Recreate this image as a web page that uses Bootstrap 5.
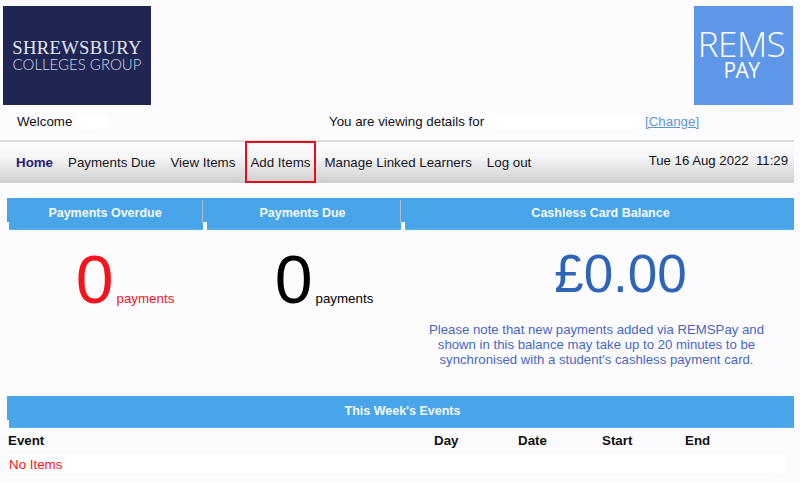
<!doctype html>
<html lang="en">
<head>
<meta charset="utf-8">
<title>REMSPay</title>
<link rel="stylesheet" href="https://cdn.jsdelivr.net/npm/bootstrap@5.3.0/dist/css/bootstrap.min.css">
<style>
html,body{height:482px;overflow:hidden}
body{background:#fcfcff;font-family:"Liberation Sans",Arial,sans-serif;font-size:13.33px;color:#111;line-height:1.15}
.top-band{height:105px;padding:6px 7px 0 3px}
.logo-college{width:148px;height:99px;background:#1f2654;color:#e4e5ee;padding-top:33px;text-align:center}
.logo-college .l1{font-family:"Liberation Serif",serif;font-size:18.6px;line-height:18px;letter-spacing:.35px}
.logo-college .l2{font-family:"Lato",sans-serif;font-weight:300;font-size:15px;line-height:14px;color:#d3d5e2}
.logo-rems{width:99px;height:99px;background:#5e96e8;color:#fff;text-align:center;padding:19px 4px 0 0;font-family:"Open Sans",sans-serif}
.logo-rems .l1{font-size:35px;line-height:38px;font-weight:300;letter-spacing:-.5px}
.logo-rems .l2{font-size:21px;line-height:24px;margin-top:-5px;letter-spacing:-.6px}
.welcome-band{height:35px;padding-left:17px;padding-bottom:2px}
.welcome-txt{width:312px}
.details-txt{width:316px}
.blot{display:inline-block;height:14px;background:#fff;border-radius:7px;vertical-align:middle}
.blot-a{width:34px;margin-left:2px}
.blot-b{width:155px;margin-left:3px}
.change-link{color:#5c96d8;text-decoration:underline}
.menu-band{height:43px;border-top:2px solid #ddd;background:linear-gradient(#fcfcff 0,#f6f6f7 35%,#cfcfcf 100%);margin-right:6px;padding:0 6px 0 16px}
.menu-item{color:#16161e;text-decoration:none;display:block}
.menu-item.on{color:#2b1d72;font-weight:700}
.menu-gap{gap:15px}
.menu-boxed{border:2px solid #e3101c;height:42px;margin:-1px -7px 0 -5px;padding:12px 4px 0 3px}
.clock{padding-bottom:3px;font-size:13.2px}
.stats-wrap{padding:15px 6px 0 7px}
.head-cell{background:#48a5e9;color:#f6fbff;font-weight:700;font-size:12.5px;height:32px;display:flex;align-items:center;justify-content:center;position:relative;border-bottom:1px solid #5bb0ee}
.head-cell::before{content:"";position:absolute;left:0;bottom:-1px;width:2px;height:8px;background:#fcfcff}
.sep::before{width:4px;background:#fff}
.sep::after{content:"";position:absolute;left:-1px;top:2px;height:22px;width:1px;background:#b8bcc2}
.w1{width:196px}.w2{width:198px;padding-left:1px}.w3{flex:1;padding-left:6px}
.big{font-size:68px;line-height:70px}
.stat-red{color:#f5141c}
.stat-black{color:#000}
.stat-blue{color:#2f65b8;font-size:53px;line-height:62px;padding-left:48px}
.unit{font-size:13.33px;margin-left:3px}
.note{color:#4767c0;font-size:13.2px;line-height:15px;margin-top:17px;text-align:center}
.stats-row{height:166px}
.col-a{width:196px;padding:14px 0 0 40px;text-align:center}
.col-b{width:198px;padding:14px 0 0 44px;text-align:center}
.col-c{flex:1;padding:13px 2px 0 0;text-align:center}
.events-head{padding-left:4px}
.events-cols{font-weight:700;height:27px;padding:0 0 1px 1px}
.c-event{width:426px}.c-day{width:84px}.c-date{width:84px}.c-start{width:83px}
.no-items{color:#f5141c;background:#fff;height:18px;padding:2px 0 0 1px;margin:0 9px 0 1px}
.rule-line{height:1px;background:#f5f5fb;margin:0 24px 0 1px}
</style>
</head>
<body>
<div class="top-band d-flex justify-content-between">
  <div class="logo-college">
    <div class="l1">SHREWSBURY</div>
    <div class="l2">COLLEGES GROUP</div>
  </div>
  <div class="logo-rems">
    <div class="l1">REMS</div>
    <div class="l2">PAY</div>
  </div>
</div>
<div class="welcome-band d-flex align-items-center">
  <div class="welcome-txt">Welcome<span class="blot blot-a"></span></div>
  <div class="details-txt">You are viewing details for<span class="blot blot-b"></span></div>
  <div><span class="change-link">[Change]</span></div>
</div>
<nav class="menu-band d-flex align-items-center justify-content-between">
  <div class="d-flex align-items-center menu-gap">
    <a class="menu-item on" href="#">Home</a>
    <a class="menu-item" href="#">Payments Due</a>
    <a class="menu-item" href="#">View Items</a>
    <a class="menu-item menu-boxed" href="#">Add Items</a>
    <a class="menu-item" href="#">Manage Linked Learners</a>
    <a class="menu-item" href="#">Log out</a>
  </div>
  <div class="clock">Tue 16 Aug 2022&nbsp;&nbsp;11:29</div>
</nav>
<main class="stats-wrap">
  <div class="d-flex">
    <div class="head-cell w1">Payments Overdue</div>
    <div class="head-cell sep w2">Payments Due</div>
    <div class="head-cell sep w3">Cashless Card Balance</div>
  </div>
  <div class="d-flex stats-row">
    <div class="col-a stat-red"><span class="big">0</span><span class="unit">payments</span></div>
    <div class="col-b stat-black"><span class="big">0</span><span class="unit">payments</span></div>
    <div class="col-c">
      <div class="stat-blue">£0.00</div>
      <div class="note">Please note that new payments added via REMSPay and<br>shown in this balance may take up to 20 minutes to be<br>synchronised with a student's cashless payment card.</div>
    </div>
  </div>
  <div class="head-cell events-head">This Week's Events</div>
  <div class="d-flex align-items-center events-cols">
    <div class="c-event">Event</div><div class="c-day">Day</div><div class="c-date">Date</div><div class="c-start">Start</div><div>End</div>
  </div>
  <div class="no-items d-flex align-items-center">No Items</div>
  <div class="rule-line"></div>
</main>
</body>
</html>
